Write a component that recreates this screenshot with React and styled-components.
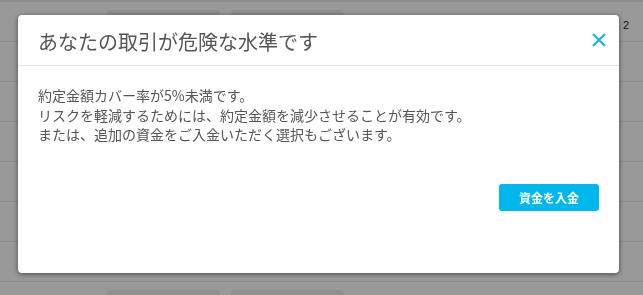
import React from "react";
import styled, { createGlobalStyle } from "styled-components";

const Global = createGlobalStyle`
  html, body { margin: 0; padding: 0; }
  body {
    background: #999999;
    font-family: "Noto Sans CJK JP", "Noto Sans", sans-serif;
    overflow: hidden;
  }
`;

const Page = styled.div`
  width: 643px;
  height: 295px;
  background: #999999;
  border-top: 2px solid #8a8a8a;
  box-sizing: border-box;
  overflow: hidden;
`;

const Row = styled.div`
  height: 40px;
  box-sizing: border-box;
  border-bottom: 1px solid #8b8b8b;
  display: flex;
  align-items: flex-start;
  padding: 8px 0 0 72px;
  gap: 11px;
`;

const Label = styled.span`
  width: 24px;
  font: 14px/18px "Liberation Sans", sans-serif;
  color: #2a2a2a;
  margin-top: 2px;
`;

const Pill = styled.div`
  width: 113px;
  height: 24px;
  border-radius: 4px;
  background: #8f8f8f;
`;

const Corner = styled.span`
  margin-left: auto;
  margin-right: 14px;
  margin-top: 9px;
  font: 11px/12px "Liberation Sans", sans-serif;
  color: #111;
`;

const Dialog = styled.div`
  position: fixed;
  left: 18px;
  top: 15px;
  width: 601px;
  height: 258px;
  background: #ffffff;
  border-radius: 4px;
  box-shadow: 0 1px 5px rgba(0, 0, 0, 0.55);
  display: flex;
  flex-direction: column;
  box-sizing: border-box;
`;

const Header = styled.div`
  height: 51px;
  box-sizing: border-box;
  border-bottom: 1px solid #e3e3e3;
  display: flex;
  align-items: center;
  padding: 3px 13px 0 20px;
`;

const Title = styled.h2`
  margin: 0;
  flex: 1;
  font-size: 20px;
  font-weight: 400;
  color: #555555;
  line-height: 28px;
`;

const Close = styled.button`
  width: 14px;
  height: 14px;
  padding: 0;
  border: 0;
  background: none;
  display: flex;
  cursor: pointer;
  margin-bottom: 3px;
`;

const Body = styled.div`
  padding: 20px 20px 0 20px;
  font-size: 14px;
  line-height: 19.5px;
  color: #555555;
`;

const Line = styled.p`
  margin: 0;
`;

const Footer = styled.div`
  display: flex;
  justify-content: flex-end;
  padding: 39px 20px 0 20px;
`;

const Primary = styled.button`
  width: 100px;
  height: 27px;
  border: 0;
  border-radius: 3px;
  background: #00b7ee;
  color: #ffffff;
  font-family: "Noto Sans CJK JP", sans-serif;
  font-size: 12px;
  font-weight: 700;
  cursor: pointer;
`;

export default function App() {
  return (
    <>
      <Global />
      <Page>
        <Row>
          <Label>Tel</Label>
          <Pill />
          <Pill />
          <Corner>2</Corner>
        </Row>
        {Array.from({ length: 6 }).map((_, i) => (
          <Row key={i} />
        ))}
        <Row>
          <Label>Tel</Label>
          <Pill />
          <Pill />
        </Row>
      </Page>
      <Dialog role="dialog">
        <Header>
          <Title>あなたの取引が危険な水準です</Title>
          <Close aria-label="close">
            <svg width="14" height="14" viewBox="0 0 14 14">
              <path d="M1 1 L13 13 M13 1 L1 13" stroke="#10b4ea" strokeWidth="2" />
            </svg>
          </Close>
        </Header>
        <Body>
          <Line>約定金額カバー率が5%未満です。</Line>
          <Line>リスクを軽減するためには、約定金額を減少させることが有効です。</Line>
          <Line>または、追加の資金をご入金いただく選択もございます。</Line>
        </Body>
        <Footer>
          <Primary>資金を入金</Primary>
        </Footer>
      </Dialog>
    </>
  );
}
